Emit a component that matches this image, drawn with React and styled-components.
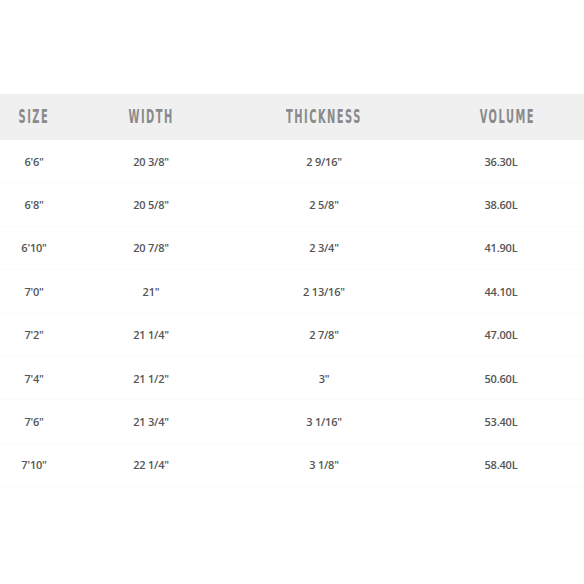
import styled, { createGlobalStyle } from 'styled-components';

const rows = [
  ['6\'6"', '20 3/8"', '2 9/16"', '36.30L'],
  ['6\'8"', '20 5/8"', '2 5/8"', '38.60L'],
  ['6\'10"', '20 7/8"', '2 3/4"', '41.90L'],
  ['7\'0"', '21"', '2 13/16"', '44.10L'],
  ['7\'2"', '21 1/4"', '2 7/8"', '47.00L'],
  ['7\'4"', '21 1/2"', '3"', '50.60L'],
  ['7\'6"', '21 3/4"', '3 1/16"', '53.40L'],
  ['7\'10"', '22 1/4"', '3 1/8"', '58.40L'],
];

const headers = ['SIZE', 'WIDTH', 'THICKNESS', 'VOLUME'];

function App() {
  return (
    <>
      <GlobalStyle />
      <Page>
        <Table>
          <HeadRow>
            {headers.map((h) => (
              <HeadCell key={h}>
                <HeadText>{h}</HeadText>
              </HeadCell>
            ))}
          </HeadRow>
          {rows.map((r, i) => (
            <Row key={i}>
              {r.map((c, j) => (
                <Cell key={j}>{c}</Cell>
              ))}
            </Row>
          ))}
        </Table>
      </Page>
    </>
  );
}

const GlobalStyle = createGlobalStyle`
  * {
    margin: 0;
    padding: 0;
    box-sizing: border-box;
  }
  body {
    background: #ffffff;
    font-family: 'Open Sans', sans-serif;
  }
`;

const Page = styled.div`
  width: 584px;
  height: 584px;
  padding-top: 94px;
  background: #ffffff;
`;

const Table = styled.div`
  display: flex;
  flex-direction: column;
  width: 100%;
`;

const grid = `
  display: grid;
  grid-template-columns: 68px 166px 180px 170px;
`;

const HeadRow = styled.div`
  ${grid}
  height: 46px;
  padding-bottom: 3px;
  align-items: center;
  background: #f0f0f0;
`;

const HeadCell = styled.div`
  display: flex;
  justify-content: center;
  &:last-child {
    padding-left: 16px;
  }
`;

const HeadText = styled.span`
  display: inline-block;
  font-family: 'DejaVu Sans Condensed', 'DejaVu Sans', sans-serif;
  font-size: 20px;
  font-weight: 700;
  letter-spacing: 2.7px;
  color: #8a8a8a;
  transform: scaleX(0.55);
`;

const Row = styled.div`
  ${grid}
  height: 43.4px;
  align-items: center;
  border-bottom: 1px solid #fbfbfb;
`;

const Cell = styled.div`
  text-align: center;
  font-family: 'Open Sans', sans-serif;
  font-size: 11px;
  font-weight: 600;
  letter-spacing: -0.2px;
  color: #555555;
  &:last-child {
    padding-left: 4px;
  }
`;

export default App;
